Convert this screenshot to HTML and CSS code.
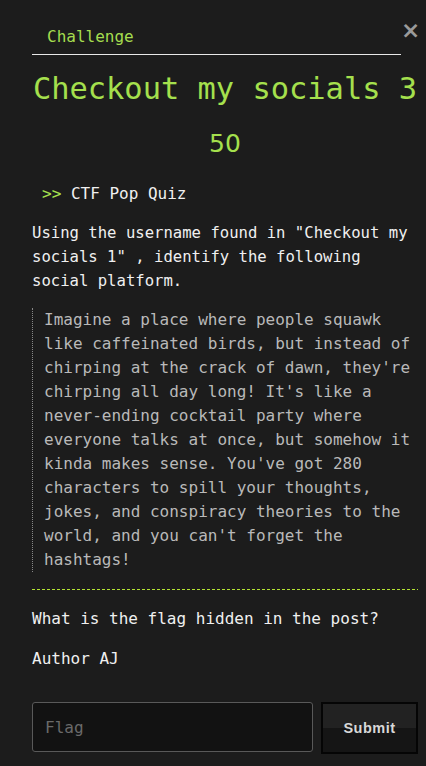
FILE: index.html
```html
<!DOCTYPE html>
<html>
<head>
<meta charset="utf-8">
<link rel="stylesheet" href="styles.css">
</head>
<body>
<div class="modal">
  <div class="head">
    <div class="tabs"><span class="tab">Challenge</span></div>
    <span class="close">×</span>
  </div>
  <h1 class="title">Checkout my socials 3</h1>
  <div class="points">50</div>
  <div class="cat"><span class="arrow">&gt;&gt;</span> CTF Pop Quiz</div>
  <p class="desc">Using the username found in "Checkout my socials 1" , identify the following social platform.</p>
  <blockquote class="quote">Imagine a place where people squawk like caffeinated birds, but instead of chirping at the crack of dawn, they're chirping all day long! It's like a never-ending cocktail party where everyone talks at once, but somehow it kinda makes sense. You've got 280 characters to spill your thoughts, jokes, and conspiracy theories to the world, and you can't forget the hashtags!</blockquote>
  <div class="dash"></div>
  <p class="q">What is the flag hidden in the post?</p>
  <p class="author">Author AJ</p>
  <form class="submit-row">
    <input class="flag" type="text" placeholder="Flag">
    <button class="btn" type="button">Submit</button>
  </form>
</div>
</body>
</html>
```
FILE: styles.css
```css
html, body {
  margin: 0;
  padding: 0;
  background: #1c1c1c;
}
body {
  font-family: "DejaVu Sans Mono", monospace;
  color: #f0f0f0;
}
.modal {
  padding: 0 8px 0 32px;
  width: 386px;
}
.head {
  display: flex;
  align-items: flex-start;
  padding-top: 19px;
}
.tabs {
  flex: 1;
  border-bottom: 1px solid #e8e8e8;
  height: 35px;
}
.tab {
  display: inline-block;
  padding-left: 15px;
  padding-top: 8px;
  font-size: 16px;
  color: #a5dd4f;
}
.close {
  font-family: "DejaVu Sans", sans-serif;
  font-weight: bold;
  color: #9a9a9a;
  font-size: 23px;
  line-height: 24px;
  width: 15px;
  margin-top: -1px;
  margin-right: 2px;
  text-align: right;
}
.title {
  margin: 16px 0 0;
  font-weight: normal;
  font-size: 30.4px;
  line-height: 36px;
  color: #a5e04d;
  white-space: nowrap;
  text-align: center;
}
.points {
  text-align: center;
  font-size: 25px;
  line-height: 30px;
  margin-top: 22px;
  color: #a5e04d;
  font-family: "DejaVu Sans", sans-serif;
}
.cat {
  margin-top: 25px;
  padding-left: 10px;
  font-size: 16px;
  line-height: 20px;
}
.arrow {
  color: #a5e04d;
}
.desc {
  margin: 17px -4px 0 0;
  font-size: 15.6px;
  line-height: 24px;
}
.quote {
  margin: 15px 0 0;
  padding: 0 0 0 11px;
  border-left: 1px dotted #888;
  color: #b9b9b9;
  font-size: 16px;
  line-height: 24px;
}
.dash {
  margin: 17px 0 0;
  height: 1px;
  background: repeating-linear-gradient(90deg, #b4e432 0 3px, transparent 3px 5px);
}
.q {
  margin: 19px 0 0;
  font-size: 16px;
  line-height: 20px;
}
.author {
  margin: 20px 0 0;
  font-size: 16px;
  line-height: 20px;
}
.submit-row {
  display: flex;
  gap: 8px;
  margin-top: 33px;
}
.flag {
  flex: 1;
  min-width: 0;
  height: 50px;
  box-sizing: border-box;
  background: #121212;
  border: 1px solid #595959;
  border-radius: 3px;
  padding: 0 12px;
  font-family: "DejaVu Sans Mono", monospace;
  font-size: 16px;
  color: #ddd;
}
.flag::placeholder {
  color: #6a6a6a;
}
.btn {
  width: 97px;
  height: 52px;
  box-sizing: border-box;
  border: 2px solid #050505;
  background: linear-gradient(#222 0%, #222 50%, #151515 50%, #151515 100%);
  color: #d8d8d8;
  font-family: "Liberation Sans", Arial, sans-serif;
  font-weight: bold;
  font-size: 14.5px;
  letter-spacing: 0.5px;
}
```
